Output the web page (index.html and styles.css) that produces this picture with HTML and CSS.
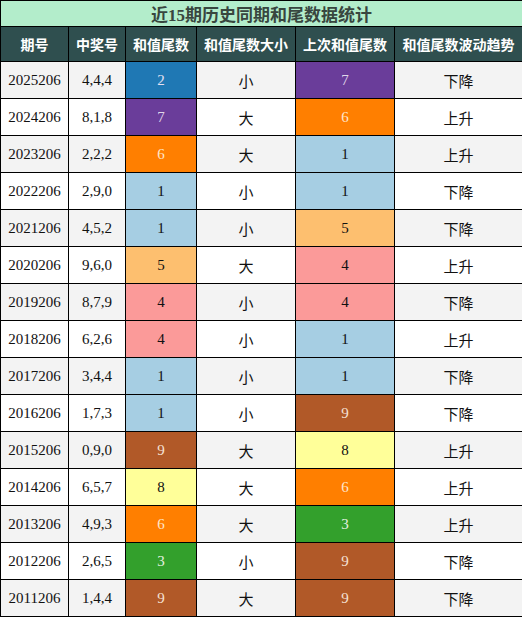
FILE: index.html
```html
<!DOCTYPE html>
<html lang="zh-CN">
<head>
    <meta charset="UTF-8">
    <title>近15期历史同期和尾数据统计</title>
    <link rel="stylesheet" href="styles.css">
</head>
<body>
    <table class="stats">
        <colgroup>
            <col class="c-issue">
            <col class="c-win">
            <col class="c-tail">
            <col class="c-size">
            <col class="c-prev">
            <col class="c-trend">
        </colgroup>
        <thead>
            <tr class="title-row"><th colspan="6">近15期历史同期和尾数据统计</th></tr>
            <tr class="head-row">
                <th>期号</th>
                <th>中奖号</th>
                <th>和值尾数</th>
                <th>和值尾数大小</th>
                <th>上次和值尾数</th>
                <th>和值尾数波动趋势</th>
            </tr>
        </thead>
        <tbody>
            <tr><td>2025206</td><td>4,4,4</td><td class="d2">2</td><td>小</td><td class="d7">7</td><td>下降</td></tr>
            <tr><td>2024206</td><td>8,1,8</td><td class="d7">7</td><td>大</td><td class="d6">6</td><td>上升</td></tr>
            <tr><td>2023206</td><td>2,2,2</td><td class="d6">6</td><td>大</td><td class="d1">1</td><td>上升</td></tr>
            <tr><td>2022206</td><td>2,9,0</td><td class="d1">1</td><td>小</td><td class="d1">1</td><td>下降</td></tr>
            <tr><td>2021206</td><td>4,5,2</td><td class="d1">1</td><td>小</td><td class="d5">5</td><td>下降</td></tr>
            <tr><td>2020206</td><td>9,6,0</td><td class="d5">5</td><td>大</td><td class="d4">4</td><td>上升</td></tr>
            <tr><td>2019206</td><td>8,7,9</td><td class="d4">4</td><td>小</td><td class="d4">4</td><td>下降</td></tr>
            <tr><td>2018206</td><td>6,2,6</td><td class="d4">4</td><td>小</td><td class="d1">1</td><td>上升</td></tr>
            <tr><td>2017206</td><td>3,4,4</td><td class="d1">1</td><td>小</td><td class="d1">1</td><td>下降</td></tr>
            <tr><td>2016206</td><td>1,7,3</td><td class="d1">1</td><td>小</td><td class="d9">9</td><td>下降</td></tr>
            <tr><td>2015206</td><td>0,9,0</td><td class="d9">9</td><td>大</td><td class="d8">8</td><td>上升</td></tr>
            <tr><td>2014206</td><td>6,5,7</td><td class="d8">8</td><td>大</td><td class="d6">6</td><td>上升</td></tr>
            <tr><td>2013206</td><td>4,9,3</td><td class="d6">6</td><td>大</td><td class="d3">3</td><td>上升</td></tr>
            <tr><td>2012206</td><td>2,6,5</td><td class="d3">3</td><td>小</td><td class="d9">9</td><td>下降</td></tr>
            <tr><td>2011206</td><td>1,4,4</td><td class="d9">9</td><td>大</td><td class="d9">9</td><td>下降</td></tr>
        </tbody>
    </table>
</body>
</html>
```

FILE: styles.css
```css
body {
    margin: 0;
    background-color: #fff;
    font-family: "Liberation Serif", "Noto Sans CJK SC", serif;
}
.stats {
    width: 522px;
    border-collapse: collapse;
    table-layout: fixed;
}
.c-issue { width: 68px; }
.c-win { width: 57px; }
.c-tail { width: 71px; }
.c-size { width: 99px; }
.c-prev { width: 99px; }
.c-trend { width: 128px; }

.stats th,
.stats td {
    border: 1px solid #000;
    padding: 0;
    text-align: center;
}
.title-row th {
    height: 25px;
    background-color: #b3edcb;
    color: #38463f;
    font-size: 17px;
    font-weight: bold;
}
.head-row th {
    height: 34px;
    background-color: #2f4f4f;
    color: #fff;
    font-size: 14px;
    font-weight: bold;
}
.stats td {
    height: 36px;
    font-size: 15px;
    color: #111;
}
.stats tbody tr:nth-child(odd) {
    background-color: #f3f3f3;
}
.stats tbody tr:nth-child(even) {
    background-color: #fff;
}

/* tail digit colours */
.d1 { background-color: #a6cee3; }
.d2 { background-color: #1f78b4; color: #e6e0f2 !important; }
.d3 { background-color: #33a02c; color: #e6f0e0 !important; }
.d4 { background-color: #fb9a99; }
.d5 { background-color: #fdbf6f; }
.d6 { background-color: #ff7f00; color: #ffe6cc !important; }
.d7 { background-color: #6a3d9a; color: #e0d8ea !important; }
.d8 { background-color: #ffff99; }
.d9 { background-color: #b15928; color: #f5e2d6 !important; }
```
